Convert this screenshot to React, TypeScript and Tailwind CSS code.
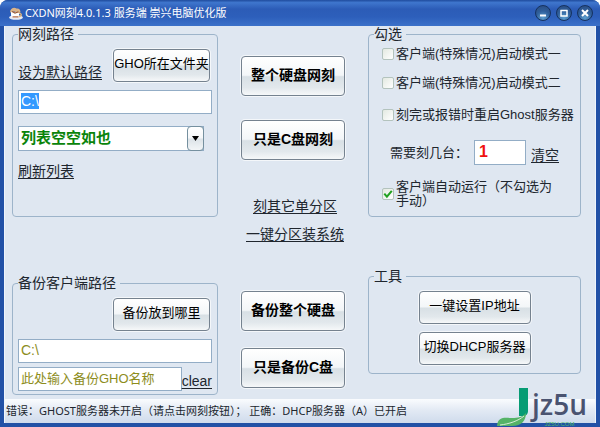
import { useEffect, useRef, type ReactNode } from "react";

const SURFACE =
  "rounded border border-[#75828f] bg-[linear-gradient(#ffffff_0%,#f3f6f8_48%,#d8e0e5_52%,#e2e8ec_80%,#f6f8f9_100%)] shadow-[0_0_0_1px_#f4f7fa] text-black whitespace-nowrap";

function SmallButton({ children, className }: { children: ReactNode; className: string }) {
  return (
    <button type="button" className={`${SURFACE} h-[33px] pb-[3px] text-[13px] leading-5 ${className}`}>
      {children}
    </button>
  );
}

function BigButton({ children, className = "" }: { children: ReactNode; className?: string }) {
  return (
    <button type="button" className={`${SURFACE} h-10 w-[104px] pb-[3px] text-sm font-bold ${className}`}>
      {children}
    </button>
  );
}

function TextLink({ children, className = "" }: { children: ReactNode; className?: string }) {
  return (
    <a href="#" className={`text-sm leading-5 whitespace-nowrap text-[#20262e] underline underline-offset-2 ${className}`}>
      {children}
    </a>
  );
}

function Group({ title, children, className = "" }: { title: string; children: ReactNode; className?: string }) {
  return (
    <fieldset className={`min-w-0 rounded border border-[#9db4ca] px-[5px] ${className}`}>
      <legend className="pr-1 text-sm leading-4 text-[#20262e]">{title}</legend>
      {children}
    </fieldset>
  );
}

function Check({
  label,
  checked = false,
  className = "",
}: {
  label: string;
  checked?: boolean;
  className?: string;
}) {
  return (
    <label className={`flex items-center gap-[2px] text-[13px] ${className}`}>
      <span className="grid shrink-0">
        <input
          type="checkbox"
          defaultChecked={checked}
          className="peer col-start-1 row-start-1 size-3 appearance-none rounded-xs border border-[#b3c3bd] bg-[linear-gradient(135deg,#e3e9e1,#ffffff)]"
        />
        <svg
          viewBox="0 0 12 12"
          className="pointer-events-none invisible col-start-1 row-start-1 size-3 peer-checked:visible"
        >
          <path d="M2.3 5.6 4.9 8.600 9.8 2.8" fill="none" stroke="#21a121" strokeWidth="2" />
        </svg>
      </span>
      <span>{label}</span>
    </label>
  );
}

function WindowButton({ label, children }: { label: string; children: ReactNode }) {
  return (
    <button
      type="button"
      aria-label={label}
      className="size-4 rounded-full border border-[#16325f] bg-[radial-gradient(circle_at_50%_85%,#5d9fd0,#2f5f9b_50%,#2a4a80)]"
    >
      <svg viewBox="0 0 14 14" className="size-full" fill="none" stroke="#fff" strokeWidth="2">
        {children}
      </svg>
    </button>
  );
}

function AppIcon() {
  return (
    <svg viewBox="0 0 14 14" className="size-[14px] shrink-0">
      <ellipse cx="7" cy="11.500" rx="6.800" ry="2.300" fill="#e6e9f2" />
      <path d="M2 6h8v3a2.500 2.500 0 0 1-2.500 2.500h-3A2.500 2.500 0 0 1 2 9z" fill="#fff" />
      <path d="M1 6.500C1 2.500 5 .5 7.500 2.500c2.500-.5 4 1 4 4L9 7 5.500 5.500z" fill="#dbb489" />
      <path d="M3 5.500 6 7 9.500 5.800" stroke="#985a38" strokeWidth="1.200" fill="none" />
      <path d="M10 7.500c3-.5 3 3 0 3" stroke="#e7b877" strokeWidth="1.300" fill="none" />
      <path d="M3.500 10.800h6" stroke="#b26845" strokeWidth="1.300" />
    </svg>
  );
}

function Watermark() {
  return (
    <div className="pointer-events-none absolute right-[13px] bottom-0 flex items-end gap-px">
      <svg viewBox="0 0 34 42" className="h-[42px] w-[34px]">
        <path d="M22 3h9v23c0 3-2 5-5 5h-4z" fill="#079c74" />
        <path d="M0 41C1 31 8 33 15 33c6 0 11-1 14-5 0 7-4 13-14 13z" fill="#55b367" />
        <path d="M3 40c9-1 18-4 24-9" stroke="#d8edda" strokeWidth="1" fill="none" />
      </svg>
      <div className="flex flex-col items-center">
        <span className="font-['Open_Sans','Noto_Sans',sans-serif] text-[28px] leading-[34px] font-semibold text-[#4a5370]">jz5u</span>
        <span className="text-[6px] leading-[6px] text-[#4fb568]">JZ5U.COM</span>
      </div>
    </div>
  );
}

const FIELD = "h-6 w-full min-w-0 rounded-none border border-[#93adc6] bg-white px-[2px] pb-[3px] outline-none";

export default function App() {
  const pathRef = useRef<HTMLInputElement>(null);

  useEffect(() => {
    pathRef.current?.focus();
    pathRef.current?.select();
  }, []);

  return (
    <div className="relative flex min-h-screen flex-col overflow-hidden rounded-t-lg bg-[#2251a6] font-['Liberation_Sans','Noto_Sans_CJK_SC',sans-serif] text-[#20262e]">
      <header className="flex h-[26px] items-center justify-between bg-[linear-gradient(#1f4b9d_0%,#3f76cd_10%,#2c5cb7_35%,#2d5fbb_65%,#3c71c9_100%)] pr-[7px] pl-[9px]">
        <div className="flex items-center gap-[2px]">
          <AppIcon />
          <h1 className="font-['Noto_Sans','Noto_Sans_CJK_SC',sans-serif] text-[11px] whitespace-nowrap text-white">
            CXDN网刻4.0.1.3 服务端 崇兴电脑优化版
          </h1>
        </div>
        <div className="flex gap-[5px]">
          <WindowButton label="最小化">
            <path d="M4 9.500h6" />
          </WindowButton>
          <WindowButton label="最大化">
            <path d="M3.500 4.500h7M4 4v6h6V4" strokeWidth="1.500" />
          </WindowButton>
          <WindowButton label="关闭">
            <path d="m4 4 6 6m0-6-6 6" />
          </WindowButton>
        </div>
      </header>

      <div className="mx-1 mb-1 flex flex-1 flex-col border-x border-[#eef4fb] bg-[#dfe7f1]">
        <main className="grid flex-1 grid-cols-[206fr_150fr_213fr] items-start pr-[14px] pb-1 pl-[7px]">
          <div className="flex flex-col gap-[58px]">
            <Group title="网刻路径" className="pb-[35px]">
              <div className="mt-[7px] flex items-end justify-between pr-[2px]">
                <TextLink>设为默认路径</TextLink>
                <SmallButton className="w-[97px]">GHO所在文件夹</SmallButton>
              </div>
              <input
                ref={pathRef}
                aria-label="网刻路径"
                defaultValue="C:\"
                className={`${FIELD} mt-2 block text-sm selection:bg-[#3399ff] selection:text-white`}
              />
              <div className="mt-3 mr-2 grid">
                <select
                  aria-label="镜像列表"
                  className="col-start-1 row-start-1 h-[25px] appearance-none border border-[#93adc6] bg-white pb-[2px] pl-[2px] text-[15px] font-bold text-[#0a840a]"
                >
                  <option>列表空空如也</option>
                </select>
                <span className="pointer-events-none col-start-1 row-start-1 flex w-[17px] items-center justify-center justify-self-end rounded-sm border border-[#75909f] bg-[linear-gradient(#ffffff,#f5f7f9_48%,#dce3e8_52%,#f2f5f7)]">
                  <svg viewBox="0 0 7 5" className="h-[5px] w-[7px]">
                    <path d="M0 0h7L3.500 5z" fill="#000" />
                  </svg>
                </span>
              </div>
              <TextLink className="mt-[10px] block w-fit">刷新列表</TextLink>
            </Group>

            <Group title="备份客户端路径" className="pb-[3px]">
              <div className="mt-[7px] flex justify-end pr-[2px]">
                <SmallButton className="w-[97px]">备份放到哪里</SmallButton>
              </div>
              <input
                aria-label="备份路径"
                defaultValue="C:\"
                className={`${FIELD} mt-2 block text-sm text-[#8d8d1c]`}
              />
              <div className="mt-1 flex items-end">
                <input
                  aria-label="备份GHO名称"
                  defaultValue="此处输入备份GHO名称"
                  className={`${FIELD} flex-1 text-[13px] text-[#8d8d1c]`}
                />
                <TextLink>clear</TextLink>
              </div>
            </Group>
          </div>

          <div className="flex flex-col items-center pt-[30px]">
            <BigButton>整个硬盘网刻</BigButton>
            <BigButton className="mt-6">只是C盘网刻</BigButton>
            <div className="mt-9 flex flex-col items-center gap-2 pl-1">
              <TextLink>刻其它单分区</TextLink>
              <TextLink>一键分区装系统</TextLink>
            </div>
            <BigButton className="mt-[47px]">备份整个硬盘</BigButton>
            <BigButton className="mt-[17px]">只是备份C盘</BigButton>
          </div>

          <div className="flex flex-col gap-[51px]">
            <Group title="勾选" className="pb-2">
              <div className="pl-2">
                <Check label="客户端(特殊情况)启动模式一" className="mt-[2px] leading-5 whitespace-nowrap" />
                <Check label="客户端(特殊情况)启动模式二" className="mt-[9px] leading-5 whitespace-nowrap" />
                <Check label="刻完或报错时重启Ghost服务器" className="mt-3 leading-5 whitespace-nowrap" />
                <div className="mt-[15px] flex items-center pl-2">
                  <label htmlFor="count" className="w-[84px] text-[13px] whitespace-nowrap">
                    需要刻几台：
                  </label>
                  <input
                    id="count"
                    defaultValue="1"
                    className="h-[25px] w-[52px] border border-[#93adc6] bg-white px-1 pb-[2px] text-base font-bold text-[#f01010] outline-none"
                  />
                  <TextLink className="ml-[5px] self-end">清空</TextLink>
                </div>
                <Check checked label="客户端自动运行（不勾选为手动）" className="mt-[15px] w-[176px] leading-[14px]" />
              </div>
            </Group>

            <Group title="工具" className="pb-2">
              <div className="mt-[7px] flex flex-col items-center gap-2">
                <SmallButton className="w-28">一键设置IP地址</SmallButton>
                <SmallButton className="w-28">切换DHCP服务器</SmallButton>
              </div>
            </Group>
          </div>
        </main>

        <footer className="flex h-6 items-center bg-[linear-gradient(#fafcfe,#e3eaf4_45%,#cfdbec)] pl-px font-['Noto_Sans','Noto_Sans_CJK_SC',sans-serif] text-[11px] whitespace-pre">
          错误：GHOST服务器未开启（请点击网刻按钮）； 正确：DHCP服务器（A）已开启
        </footer>
      </div>
      <Watermark />
    </div>
  );
}
